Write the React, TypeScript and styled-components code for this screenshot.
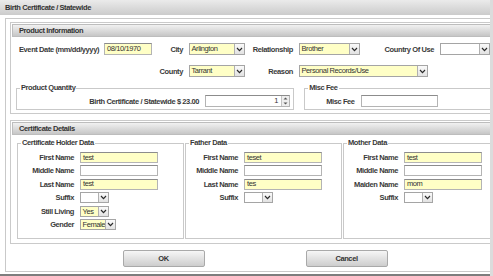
import React, { FC } from 'react';
import styled, { createGlobalStyle } from 'styled-components';

const FONT = `"Liberation Sans Narrow", "Liberation Sans", Arial, sans-serif`;

const GlobalStyle = createGlobalStyle`
  html, body {
    margin: 0;
    padding: 0;
    background: #fff;
    overflow: hidden;
  }
  body {
    font-family: ${FONT};
    font-size: 7.5px;
    letter-spacing: -0.4px;
    color: #333;
  }
`;

const Screen = styled.div`
  display: flex;
  width: 493px;
  height: 276px;
`;

const Dialog = styled.div`
  display: flex;
  flex-direction: column;
  width: 490px;
  height: 276px;
  box-sizing: border-box;
  overflow: hidden;
  border-bottom: 2px solid #7d7d7d;
`;

const Strip = styled.div`
  width: 3px;
  background: #dcdcdc;
`;

const TitleBar = styled.div`
  height: 15px;
  flex: none;
  padding-left: 5px;
  line-height: 15px;
  font-weight: bold;
  color: #333;
  background: linear-gradient(#ebebeb, #cbcbcb);
`;

const Body = styled.div`
  padding: 3px 0 0 5px;
`;

const OuterBox = styled.div`
  width: 496px;
  height: 254px;
  box-sizing: border-box;
  border: 1px solid #c9c9c9;
  padding: 3px 0 5px 4px;
  display: flex;
  flex-direction: column;
`;

const Panel = styled.section<{ $gap?: number; $bottom?: number }>`
  border: 1px solid #cacaca;
  margin-top: ${(p) => p.$gap ?? 0}px;
  padding: 1px 1px ${(p) => p.$bottom ?? 3}px 1px;
`;

const PanelHeader = styled.div`
  height: 13px;
  box-sizing: border-box;
  border: 1px solid #bdbdbd;
  padding-left: 6px;
  line-height: 11px;
  font-weight: bold;
  color: #333;
  background: linear-gradient(#f1f1f1, #c6c6c6);
`;

const InfoGrid = styled.div`
  display: grid;
  grid-template-columns: 79px 48px 25px 56px 42px 60px 69px 50px;
  grid-auto-rows: 12px;
  column-gap: 6px;
  row-gap: 10px;
  margin-top: 6px;
  padding-left: 7px;
  align-items: center;
`;

const Label = styled.span<{ $right?: boolean }>`
  font-weight: bold;
  color: #3a3a3a;
  white-space: nowrap;
  text-align: ${(p) => (p.$right ? 'right' : 'left')};
`;

const TextBox = styled.div<{ $w: number; $fill?: boolean; $end?: boolean }>`
  width: ${(p) => p.$w}px;
  height: 100%;
  box-sizing: border-box;
  border: 1px solid #b4b4b4;
  border-top-color: #8c8c8c;
  background: ${(p) => (p.$fill ? '#ffffc6' : '#fff')};
  padding: 0 ${(p) => (p.$end ? 0 : 2)}px 0 2px;
  line-height: 10px;
  color: #333;
  display: flex;
  align-items: center;
  justify-content: ${(p) => (p.$end ? 'flex-end' : 'flex-start')};
  overflow: hidden;
  white-space: nowrap;
`;

const SelectBox = styled.div<{ $w: number; $fill?: boolean }>`
  width: ${(p) => p.$w}px;
  height: 100%;
  box-sizing: border-box;
  border: 1px solid #a5a5a5;
  background: ${(p) => (p.$fill ? '#ffffc6' : '#fff')};
  display: flex;
  align-items: stretch;
`;

const SelectValue = styled.span`
  flex: 1;
  padding-left: 1.5px;
  line-height: 10px;
  overflow: hidden;
  white-space: nowrap;
`;

const ArrowBtn = styled.span`
  width: 9px;
  flex: none;
  border-left: 1px solid #b0b0b0;
  background: linear-gradient(#fafafa, #e2e2e2);
  display: flex;
  align-items: center;
  justify-content: center;
`;

const Spin = styled.span`
  width: 7px;
  flex: none;
  margin-left: 3px;
  border-left: 1px solid #c4c4c4;
  background: #eee;
  display: flex;
  flex-direction: column;
  justify-content: space-around;
  align-items: center;
  height: 100%;
`;

const WideCell = styled.div`
  grid-column: 6 / span 3;
  height: 100%;
`;

const Select: FC<{ w: number; value: string }> = ({ w, value }) => (
  <SelectBox $w={w} $fill={value !== ''}>
    <SelectValue>{value}</SelectValue>
    <ArrowBtn>
      <svg width="7" height="5" viewBox="0 0 7 5">
        <path d="M1 1 L3.5 3.6 L6 1" fill="none" stroke="#2b2b2b" strokeWidth="1.2" />
      </svg>
    </ArrowBtn>
  </SelectBox>
);

const FieldsetRow = styled.div`
  display: flex;
  gap: 10px;
  margin-top: 6px;
  padding-left: 4px;
`;

const Fieldset = styled.fieldset<{ $w: number }>`
  margin: 0;
  min-width: 0;
  width: ${(p) => p.$w}px;
  box-sizing: border-box;
  border: 1px solid #c9c9c9;
  padding: 2px 3px 2px 0;
`;

const Legend = styled.legend`
  margin-left: 3px;
  padding: 0 1px;
  height: 10px;
  line-height: 10px;
  font-weight: bold;
  color: #3a3a3a;
`;

const FeeRow = styled.div<{ $end?: boolean; $indent?: number }>`
  display: flex;
  justify-content: ${(p) => (p.$end ? 'flex-end' : 'flex-start')};
  align-items: center;
  gap: 6px;
  height: 12px;
  padding-left: ${(p) => p.$indent ?? 0}px;
`;

const DetailGrid = styled.div`
  display: grid;
  grid-template-columns: 167px 157px 158px;
  column-gap: 1px;
  margin-top: 3px;
  padding-left: 5px;
`;

const PersonSet = styled.fieldset`
  margin: 0;
  min-width: 0;
  border: 1px solid #c9c9c9;
  padding: 4px 0 8px 0;
`;

const PersonGrid = styled.div<{ $labelW: number }>`
  display: grid;
  grid-template-columns: ${(p) => p.$labelW}px auto;
  grid-auto-rows: 11px;
  column-gap: 6px;
  row-gap: 2.4px;
  align-items: center;
  justify-items: start;
`;

const PersonLabel = styled(Label)`
  justify-self: end;
`;

const ButtonRow = styled.div`
  display: flex;
  justify-content: center;
  gap: 101px;
  margin-top: 6px;
`;

const Button = styled.button`
  width: 82px;
  height: 17px;
  padding: 0;
  border: 1px solid #a9a9a9;
  border-radius: 2px;
  background: linear-gradient(#f6f6f6, #cdcdcd);
  font-family: ${FONT};
  font-size: 7.5px;
  letter-spacing: -0.4px;
  font-weight: bold;
  color: #333;
`;

type Field = { label: string; kind: 'text' | 'select'; value: string; w?: number };

const holder: Field[] = [
  { label: 'First Name', kind: 'text', value: 'test' },
  { label: 'Middle Name', kind: 'text', value: '' },
  { label: 'Last Name', kind: 'text', value: 'test' },
  { label: 'Suffix', kind: 'select', value: '', w: 29 },
  { label: 'Still Living', kind: 'select', value: 'Yes', w: 29 },
  { label: 'Gender', kind: 'select', value: 'Female', w: 36 },
];

const father: Field[] = [
  { label: 'First Name', kind: 'text', value: 'teset' },
  { label: 'Middle Name', kind: 'text', value: '' },
  { label: 'Last Name', kind: 'text', value: 'tes' },
  { label: 'Suffix', kind: 'select', value: '', w: 29 },
];

const mother: Field[] = [
  { label: 'First Name', kind: 'text', value: 'test' },
  { label: 'Middle Name', kind: 'text', value: '' },
  { label: 'Maiden Name', kind: 'text', value: 'mom' },
  { label: 'Suffix', kind: 'select', value: '', w: 29 },
];

const Person: FC<{ title: string; fields: Field[]; labelW: number }> = ({ title, fields, labelW }) => (
  <PersonSet>
    <Legend>{title}</Legend>
    <PersonGrid $labelW={labelW}>
      {fields.map((f) => (
        <React.Fragment key={f.label}>
          <PersonLabel $right>{f.label}</PersonLabel>
          {f.kind === 'text' ? (
            <TextBox $w={78} $fill={f.value !== ''}>{f.value}</TextBox>
          ) : (
            <Select w={f.w ?? 29} value={f.value} />
          )}
        </React.Fragment>
      ))}
    </PersonGrid>
  </PersonSet>
);

export default function App() {
  return (
    <Screen>
      <GlobalStyle />
      <Dialog>
        <TitleBar>Birth Certificate / Statewide</TitleBar>
        <Body>
          <OuterBox>
            <Panel>
              <PanelHeader>Product Information</PanelHeader>
              <InfoGrid>
                <Label>Event Date (mm/dd/yyyy)</Label>
                <TextBox $w={48} $fill>08/10/1970</TextBox>
                <Label $right>City</Label>
                <Select w={56} value="Arlington" />
                <Label $right>Relationship</Label>
                <Select w={61} value="Brother" />
                <Label $right>Country Of Use</Label>
                <Select w={50} value="" />

                <span />
                <span />
                <Label $right>County</Label>
                <Select w={56} value="Tarrant" />
                <Label $right>Reason</Label>
                <WideCell>
                  <Select w={129} value="Personal Records/Use" />
                </WideCell>
              </InfoGrid>
              <FieldsetRow>
                <Fieldset $w={287}>
                  <Legend>Product Quantity</Legend>
                  <FeeRow $end>
                    <Label>Birth Certificate / Statewide $ 23.00</Label>
                    <TextBox $w={85} $end>
                      1
                      <Spin>
                        <svg width="5" height="3" viewBox="0 0 5 3">
                          <path d="M0.5 2.6 L2.5 0.4 L4.5 2.6 Z" fill="#555" />
                        </svg>
                        <svg width="5" height="3" viewBox="0 0 5 3">
                          <path d="M0.5 0.4 L2.5 2.6 L4.5 0.4 Z" fill="#555" />
                        </svg>
                      </Spin>
                    </TextBox>
                  </FeeRow>
                </Fieldset>
                <Fieldset $w={200}>
                  <Legend>Misc Fee</Legend>
                  <FeeRow $indent={21}>
                    <Label>Misc Fee</Label>
                    <TextBox $w={77} />
                  </FeeRow>
                </Fieldset>
              </FieldsetRow>
            </Panel>

            <Panel $gap={6} $bottom={4}>
              <PanelHeader>Certificate Details</PanelHeader>
              <DetailGrid>
                <Person title="Certificate Holder Data" fields={holder} labelW={56} />
                <Person title="Father Data" fields={father} labelW={52} />
                <Person title="Mother Data" fields={mother} labelW={54} />
              </DetailGrid>
            </Panel>

            <ButtonRow>
              <Button>OK</Button>
              <Button>Cancel</Button>
            </ButtonRow>
          </OuterBox>
        </Body>
      </Dialog>
      <Strip />
    </Screen>
  );
}
